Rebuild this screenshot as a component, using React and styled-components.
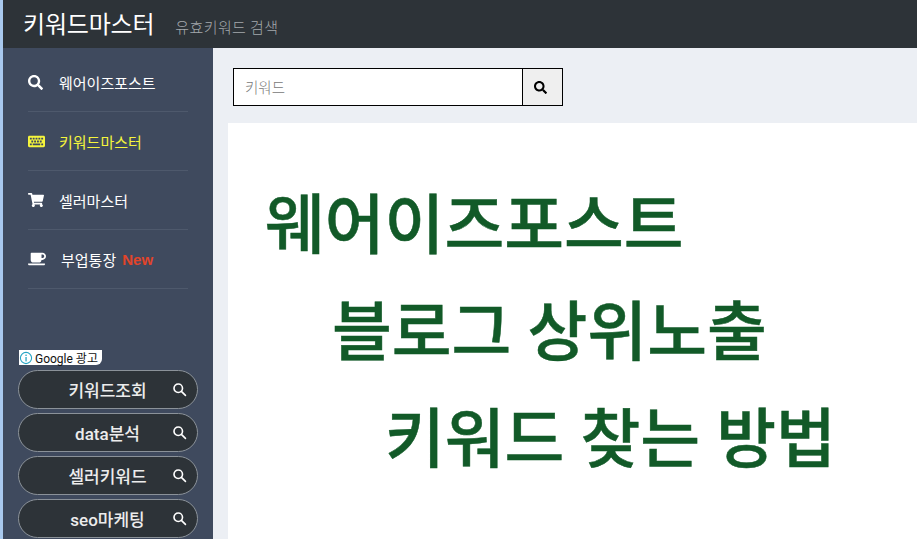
import React from 'react';
import styled, { createGlobalStyle } from 'styled-components';
import { FaSearch, FaKeyboard, FaShoppingCart, FaCoffee } from 'react-icons/fa';

const GlobalStyle = createGlobalStyle`
  html, body {
    margin: 0;
    padding: 0;
    height: 100%;
    overflow: hidden;
    background: #a9c9ee;
  }
  body {
    font-family: "Noto Sans CJK KR", "Liberation Sans", sans-serif;
  }
`;

const NAV = [
  { label: '웨어이즈포스트', icon: <FaSearch size={15} />, gap: 16 },
  { label: '키워드마스터', icon: <FaKeyboard size={17} />, gap: 14, active: true },
  { label: '셀러마스터', icon: <FaShoppingCart size={16} />, gap: 15 },
  { label: '부업통장', icon: <FaCoffee size={18} />, gap: 15, badge: 'New' },
];

const PILLS = ['키워드조회', 'data분석', '셀러키워드', 'seo마케팅'];

const LINES = [
  { text: '웨어이즈포스트', indent: 37 },
  { text: '블로그 상위노출', indent: 104 },
  { text: '키워드 찾는 방법', indent: 157 },
];

function App() {
  return (
    <Page>
      <GlobalStyle />
      <Header>
        <Brand>키워드마스터</Brand>
        <Tagline>유효키워드 검색</Tagline>
      </Header>
      <Body>
        <Sidebar>
          <Nav>
            {NAV.map((item) => (
              <NavItem key={item.label} $active={item.active}>
                <NavIcon $gap={item.gap}>{item.icon}</NavIcon>
                {item.label}
                {item.badge && <Badge>{item.badge}</Badge>}
              </NavItem>
            ))}
          </Nav>
          <AdLabel>
            <svg width="14" height="14" viewBox="0 0 14 14">
              <circle cx="7" cy="7" r="5.6" fill="none" stroke="#27a5c4" strokeWidth="1.1" />
              <rect x="6.4" y="6" width="1.3" height="4.4" fill="#27a5c4" />
              <rect x="6.4" y="3.6" width="1.3" height="1.4" fill="#27a5c4" />
            </svg>
            Google 광고
          </AdLabel>
          <Pills>
            {PILLS.map((label) => (
              <Pill key={label}>
                <PillText>{label}</PillText>
                <PillIcon width="15" height="15" viewBox="0 0 24 24">
                  <circle cx="10" cy="10" r="6.8" />
                  <path d="M15 15l6.5 6.5" />
                </PillIcon>
              </Pill>
            ))}
          </Pills>
        </Sidebar>
        <Main>
          <SearchBar>
            <SearchInput placeholder="키워드" />
            <SearchButton>
              <FaSearch size={13} />
            </SearchButton>
          </SearchBar>
          <Content>
            {LINES.map((line) => (
              <Headline key={line.text} $indent={line.indent}>{line.text}</Headline>
            ))}
          </Content>
        </Main>
      </Body>
    </Page>
  );
}

export default App;

const Page = styled.div`
  margin-left: 3px;
  height: 539px;
  display: flex;
  flex-direction: column;
  overflow: hidden;
`;

const Header = styled.header`
  height: 48px;
  flex: none;
  background: #2d3338;
  display: flex;
  align-items: center;
  padding-left: 20px;
`;

const Brand = styled.div`
  color: #fff;
  font-size: 24px;
  font-weight: 400;
  line-height: 1;
  margin-top: -2px;
  letter-spacing: -0.2px;
`;

const Tagline = styled.div`
  color: #a4a9ad;
  font-size: 15px;
  font-weight: 300;
  letter-spacing: 0.4px;
  margin-left: 21px;
  margin-top: 4px;
`;

const Body = styled.div`
  flex: 1;
  display: flex;
  min-height: 0;
`;

const Sidebar = styled.aside`
  width: 210px;
  flex: none;
  background: #3f4a5e;
  display: flex;
  flex-direction: column;
`;

const Nav = styled.nav`
  padding: 5px 25px 0;
`;

const NavItem = styled.div`
  height: 58px;
  display: flex;
  align-items: center;
  border-bottom: 1px solid #4e596c;
  color: ${(p) => (p.$active ? '#f5f53c' : '#fff')};
  font-size: 15px;
  font-weight: 400;
`;

const NavIcon = styled.span`
  display: inline-flex;
  align-items: center;
  margin-right: ${(p) => p.$gap}px;
`;

const Badge = styled.span`
  color: #e2442a;
  font-family: "Liberation Sans", sans-serif;
  font-weight: 700;
  font-size: 15px;
  margin-left: 6px;
`;

const AdLabel = styled.div`
  width: 83px;
  height: 15px;
  margin: 61px 0 0 16px;
  display: flex;
  align-items: center;
  gap: 2px;
  background: #fff;
  border-bottom-right-radius: 6px;
  color: #111;
  font-family: Roboto, "Noto Sans CJK KR", sans-serif;
  font-size: 12px;
  white-space: nowrap;
`;

const Pills = styled.div`
  display: flex;
  flex-direction: column;
  gap: 4px;
  margin: 5px 0 0 15px;
`;

const Pill = styled.div`
  box-sizing: border-box;
  width: 180px;
  height: 39px;
  flex: none;
  display: flex;
  align-items: center;
  padding: 0 10px 0 0;
  background: #2d3338;
  border: 1px solid #8b9299;
  border-radius: 20px;
`;

const PillText = styled.span`
  flex: 1;
  text-align: center;
  color: #ececec;
  font-family: Roboto, "Noto Sans CJK KR", sans-serif;
  font-weight: 500;
  font-size: 17px;
  padding-left: 24px;
`;

const PillIcon = styled.svg`
  fill: none;
  stroke: #fff;
  stroke-width: 2.6;
  stroke-linecap: round;
`;

const Main = styled.main`
  flex: 1;
  min-width: 0;
  background: #eceff4;
  display: flex;
  flex-direction: column;
`;

const SearchBar = styled.div`
  display: flex;
  width: 330px;
  height: 38px;
  margin: 20px 0 17px 20px;
  box-sizing: border-box;
  border: 1px solid #000;
`;

const SearchInput = styled.input`
  flex: 1;
  min-width: 0;
  border: 0;
  outline: 0;
  padding: 0 11px 2px;
  background: #fff;
  font-family: "Noto Sans CJK KR", sans-serif;
  font-size: 14.5px;
  font-weight: 300;
  &::placeholder {
    color: #777;
    opacity: 1;
  }
`;

const SearchButton = styled.div`
  width: 40px;
  flex: none;
  display: flex;
  align-items: center;
  justify-content: center;
  padding-right: 4px;
  box-sizing: border-box;
  background: #efefef;
  border-left: 1px solid #000;
  color: #000;
`;

const Content = styled.section`
  flex: 1;
  margin-left: 15px;
  padding-top: 44px;
  background: #fff;
`;

const Headline = styled.div`
  height: 107px;
  padding-left: ${(p) => p.$indent}px;
  color: #125a28;
  font-size: 65px;
  font-weight: 500;
  -webkit-text-stroke: 0.5px #125a28;
  line-height: 107px;
  word-spacing: 1.5px;
  white-space: nowrap;
`;
